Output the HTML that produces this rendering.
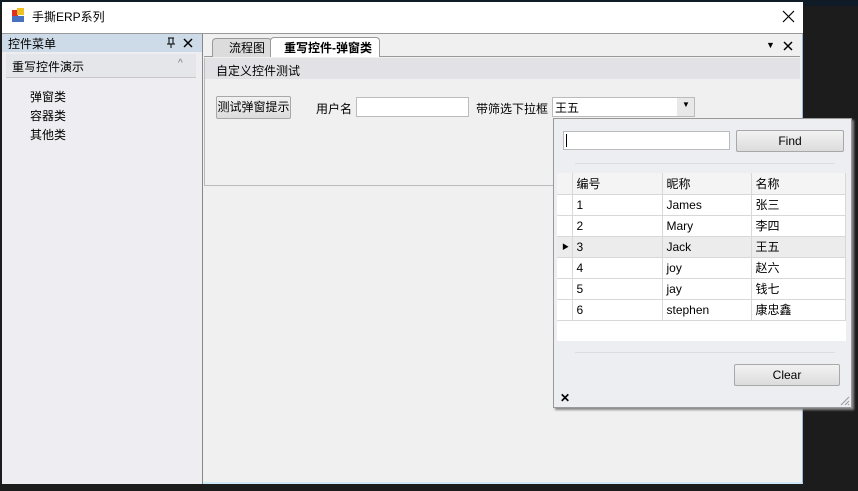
<!DOCTYPE html><html><head><meta charset="utf-8"><style>
*{margin:0;padding:0;box-sizing:border-box}
body{width:858px;height:491px;background:#1c1c1c;position:relative;overflow:hidden;font-family:"Liberation Sans","Noto Sans CJK SC",sans-serif;font-size:12px;color:#000}
.a{position:absolute}
.t{white-space:nowrap}
.btn{border:1px solid #a8a8a8;border-radius:2px;background:linear-gradient(#f2f2f2,#dcdcdc);text-align:center}
table{border-collapse:collapse}
td{border-right:1px solid #d8d8d8;border-bottom:1px solid #d8d8d8;height:21px;padding-left:4px;font-size:12px}
</style></head><body>
<div class="a" style="left:0;top:0;width:858px;height:6px;background:#0f1c28"></div>
<div class="a" style="left:2px;top:2px;width:801px;height:482px;background:#f0f0f0;border-right:1px solid #9bd;border-bottom:2px solid #cfe8f5"></div>
<div class="a" style="left:2px;top:2px;width:801px;height:31px;background:#fff"></div>
<div class="a" style="left:12px;top:10px;width:6px;height:6px;background:#e03020"></div>
<div class="a" style="left:17px;top:8px;width:7px;height:7px;background:#f0c020"></div>
<div class="a" style="left:12px;top:16px;width:12px;height:6px;background:#4a70c0"></div>
<div class="a t" style="left:32px;top:8px;font-size:12px">手撕ERP系列</div>
<svg class="a" style="left:782px;top:10px" width="13" height="13"><path d="M1 1L12 12M12 1L1 12" stroke="#000" stroke-width="1.2"/></svg>
<div class="a" style="left:2px;top:33px;width:801px;height:1px;background:#999"></div>
<div class="a" style="left:2px;top:34px;width:200px;height:450px;background:#eeeef2"></div>
<div class="a" style="left:2px;top:34px;width:200px;height:18px;background:#cddbe8"></div>
<div class="a t" style="left:8px;top:35px">控件菜单</div>
<svg class="a" style="left:166px;top:37px" width="10" height="11"><path d="M3 1V7M7 1V7M2 1H8M1 7H9M5 7V11" stroke="#000" stroke-width="1"/></svg>
<svg class="a" style="left:183px;top:38px" width="10" height="10"><path d="M1 1L9 9M9 1L1 9" stroke="#000" stroke-width="1.5"/></svg>
<div class="a" style="left:6px;top:54px;width:190px;height:24px;background:#e4e6ea;border-bottom:1px solid #c8c8c8"></div>
<div class="a t" style="left:12px;top:58px">重写控件演示</div>
<div class="a t" style="left:178px;top:58px;font-size:10px;color:#777">^</div>
<div class="a t" style="left:30px;top:88px;line-height:19px">弹窗类<br>容器类<br>其他类</div>
<div class="a" style="left:202px;top:34px;width:1px;height:450px;background:#888"></div>
<div class="a" style="left:204px;top:56px;width:596px;height:1px;background:#999"></div>
<div class="a" style="left:212px;top:38px;width:60px;height:19px;background:#dcdcdc;border:1px solid #999;border-bottom:none;border-radius:4px 4px 0 0"></div>
<div class="a t" style="left:229px;top:39px">流程图</div>
<div class="a" style="left:270px;top:37px;width:110px;height:20px;background:#fff;border:1px solid #999;border-bottom:none;border-radius:4px 4px 0 0"></div>
<div class="a t" style="left:284px;top:39px;font-weight:bold">重写控件-弹窗类</div>
<div class="a t" style="left:766px;top:40px;font-size:9px">▼</div>
<svg class="a" style="left:783px;top:41px" width="10" height="10"><path d="M1 1L9 9M9 1L1 9" stroke="#000" stroke-width="1.5"/></svg>
<div class="a" style="left:204px;top:58px;width:596px;height:128px;border-bottom:1px solid #bbb;border-left:1px solid #bbb"></div>
<div class="a" style="left:205px;top:58px;width:595px;height:21px;background:#e2e2e6"></div>
<div class="a t" style="left:216px;top:62px">自定义控件测试</div>
<div class="btn a t" style="left:216px;top:96px;width:75px;height:23px;line-height:21px">测试弹窗提示</div>
<div class="a t" style="left:316px;top:100px">用户名</div>
<div class="a" style="left:356px;top:97px;width:113px;height:20px;background:#fff;border:1px solid #bbb"></div>
<div class="a t" style="left:476px;top:100px">带筛选下拉框</div>
<div class="a" style="left:552px;top:97px;width:143px;height:20px;background:#fff;border:1px solid #bbb"></div>
<div class="a t" style="left:555px;top:99px">王五</div>
<div class="a" style="left:677px;top:98px;width:17px;height:18px;background:#e8e8e8"></div>
<div class="a t" style="left:682px;top:100px;font-size:8px">▼</div>
<div class="a" style="left:553px;top:118px;width:299px;height:290px;background:#eceef2;border:1px solid #999;box-shadow:2px 2px 2px #888"></div>
<div class="a" style="left:563px;top:131px;width:167px;height:19px;background:#fff;border:1px solid #bbb"></div>
<div class="a" style="left:566px;top:134px;width:1px;height:13px;background:#000"></div>
<div class="btn a t" style="left:736px;top:130px;width:108px;height:22px;line-height:21px">Find</div>
<div class="a" style="left:575px;top:163px;width:260px;height:1px;background:#ddd"></div>
<div class="a" style="left:557px;top:173px;width:289px;height:168px;background:#fff"></div>
<table class="a" style="left:557px;top:173px;width:289px">
<tr style="background:#f4f4f4"><td style="width:15px;padding:0"></td><td style="width:90px">编号</td><td style="width:89px">昵称</td><td>名称</td></tr>
<tr><td style="padding:0"></td><td>1</td><td>James</td><td>张三</td></tr>
<tr><td style="padding:0"></td><td>2</td><td>Mary</td><td>李四</td></tr>
<tr style="background:#ececec"><td style="padding:0 0 0 5px;font-size:7px">▶</td><td>3</td><td>Jack</td><td>王五</td></tr>
<tr><td style="padding:0"></td><td>4</td><td>joy</td><td>赵六</td></tr>
<tr><td style="padding:0"></td><td>5</td><td>jay</td><td>钱七</td></tr>
<tr><td style="padding:0"></td><td>6</td><td>stephen</td><td>康忠鑫</td></tr>
</table>
<div class="a" style="left:575px;top:352px;width:260px;height:1px;background:#ddd"></div>
<div class="btn a t" style="left:734px;top:364px;width:106px;height:22px;line-height:21px">Clear</div>
<div class="a t" style="left:560px;top:391px;font-size:12px;font-weight:bold">✕</div>
<svg class="a" style="left:838px;top:394px" width="12" height="12"><path d="M11 3L3 11M11 7L7 11M11 10L10 11" stroke="#999" stroke-width="1"/></svg>
</body></html>
